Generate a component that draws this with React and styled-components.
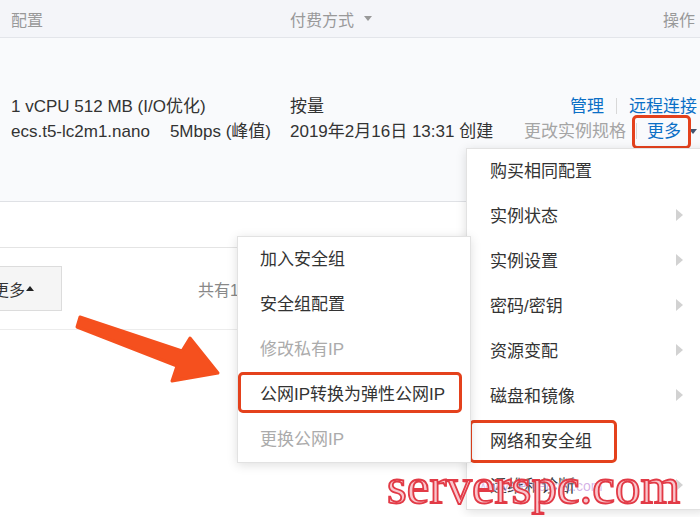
import React from "react";
import styled, { createGlobalStyle } from "styled-components";

const Global = createGlobalStyle`
  html, body { margin: 0; padding: 0; background: #fff; }
  body { font-family: "Liberation Sans", "Noto Sans CJK SC", sans-serif; overflow: hidden; }
`;

const Page = styled.div`
  position: relative;
  width: 700px;
  height: 517px;
  overflow: hidden;
  background: #fff;
  color: #333;
`;

const HeaderRow = styled.div`
  display: grid;
  grid-template-columns: 279px 1fr auto;
  align-items: center;
  height: 38px;
  padding: 0 5px 0 11px;
  background: #f4f5f9;
  border-bottom: 1px solid #e3e5ea;
  box-sizing: border-box;
  font-size: 16px;
  color: #999;
`;

const HeadCell = styled.div`
  display: flex;
  align-items: center;
  gap: 10px;
`;

const DownCaret = styled.span`
  width: 0;
  height: 0;
  border-left: 4px solid transparent;
  border-right: 4px solid transparent;
  border-top: 5px solid ${(p) => p.$color || "#999"};
  display: inline-block;
`;

const DataRow = styled.div`
  display: grid;
  grid-template-columns: 279px 1fr auto;
  align-items: center;
  height: 164px;
  padding: 0 3px 2px 11px;
  background: #f9fafc;
  border-bottom: 1px solid #dfe1e5;
  box-sizing: border-box;
  font-size: 17px;
  line-height: 25px;
`;

const Cell = styled.div`
  display: flex;
  flex-direction: column;
  align-items: ${(p) => (p.$right ? "flex-end" : "flex-start")};
  white-space: nowrap;
`;

const Spaced = styled.span`
  & + & { margin-left: 20px; }
`;

const Line = styled.div`
  display: flex;
  align-items: center;
`;

const ActionLink = styled.span`
  position: relative;
  color: ${(p) => (p.$muted ? "#a5a5a5" : "#0b6fc6")};
`;

const Sep = styled.span`
  width: 1px;
  height: 16px;
  background: #d8d8d8;
  margin: 0 ${(p) => p.$m || 10}px;
`;

const CaretSlot = styled.span`
  display: inline-flex;
  margin-left: 8px;
`;

const Highlight = styled.span`
  position: absolute;
  top: ${(p) => p.$t}px;
  bottom: ${(p) => p.$b}px;
  left: ${(p) => p.$l}px;
  right: ${(p) => p.$r}px;
  border: 3px solid #e4411c;
  border-radius: 5px;
  pointer-events: none;
`;

const Spacer = styled.div`
  height: 46px;
  border-bottom: 1px solid #e4e4e4;
  box-sizing: border-box;
`;

const FooterBar = styled.div`
  display: flex;
  align-items: center;
  height: 82px;
  border-bottom: 1px solid #ececec;
  box-sizing: border-box;
  font-size: 16px;
`;

const MoreButton = styled.div`
  display: flex;
  align-items: center;
  gap: 1px;
  margin-left: -18px;
  width: 80px;
  height: 45px;
  padding-left: 10px;
  box-sizing: border-box;
  background: #f5f5f5;
  border: 1px solid #dcdcdc;
  color: #333;
`;

const UpCaret = styled.span`
  width: 0;
  height: 0;
  border-left: 4px solid transparent;
  border-right: 4px solid transparent;
  border-bottom: 5px solid #222;
  display: inline-block;
`;

const Total = styled.span`
  margin-left: 136px;
  color: #888;
`;

const Menu = styled.div`
  position: absolute;
  left: ${(p) => p.$x}px;
  top: ${(p) => p.$y}px;
  width: ${(p) => p.$w}px;
  background: #fff;
  border: 1px solid #e2e2e2;
  box-shadow: 0 2px 10px rgba(0, 0, 0, 0.13);
  box-sizing: border-box;
  font-size: 17px;
`;

const Item = styled.div`
  position: relative;
  display: flex;
  align-items: center;
  justify-content: space-between;
  height: 45px;
  padding: 0 ${(p) => p.$pr || 16}px 4px ${(p) => p.$pl}px;
  box-sizing: border-box;
  color: ${(p) => (p.$disabled ? "#ababab" : "#333")};
  white-space: nowrap;
`;

const RightCaret = styled.span`
  width: 0;
  height: 0;
  border-top: 6px solid transparent;
  border-bottom: 6px solid transparent;
  border-left: 7px solid #d2d2d2;
  display: inline-block;
`;

const ArrowSvg = styled.svg`
  position: absolute;
  left: 0;
  top: 0;
  pointer-events: none;
`;

const Watermark = styled.div`
  position: absolute;
  left: 387px;
  top: 456px;
  font-family: "Liberation Serif", "DejaVu Serif", serif;
  font-size: 51px;
  line-height: 60px;
  color: #f9c6cd;
  -webkit-text-stroke: 1.8px #e23a46;
  text-shadow: 0 0 3px #fff, 0 0 3px #fff;
  pointer-events: none;
`;

const FaintMark = styled.div`
  position: absolute;
  left: 478px;
  top: 478px;
  font-size: 14px;
  color: rgba(160, 80, 200, 0.45);
  pointer-events: none;
`;

const mainItems = [
  { t: "购买相同配置" },
  { t: "实例状态", sub: true },
  { t: "实例设置", sub: true },
  { t: "密码/密钥", sub: true },
  { t: "资源变配", sub: true },
  { t: "磁盘和镜像", sub: true },
  { t: "网络和安全组", hl: true },
  { t: "运维和诊断", sub: true },
];

const subItems = [
  { t: "加入安全组" },
  { t: "安全组配置" },
  { t: "修改私有IP", dis: true },
  { t: "公网IP转换为弹性公网IP", hl: true },
  { t: "更换公网IP", dis: true },
];

export default function App() {
  return (
    <Page>
      <Global />
      <HeaderRow>
        <HeadCell>配置</HeadCell>
        <HeadCell>
          付费方式 <DownCaret />
        </HeadCell>
        <HeadCell>操作</HeadCell>
      </HeaderRow>
      <DataRow>
        <Cell>
          <div>1 vCPU 512 MB (I/O优化)</div>
          <Line>
            <Spaced>ecs.t5-lc2m1.nano</Spaced>
            <Spaced>5Mbps (峰值)</Spaced>
          </Line>
        </Cell>
        <Cell>
          <div>按量</div>
          <div>2019年2月16日 13:31 创建</div>
        </Cell>
        <Cell $right>
          <Line>
            <ActionLink>管理</ActionLink>
            <Sep $m={12} />
            <ActionLink>远程连接</ActionLink>
          </Line>
          <Line>
            <ActionLink $muted>更改实例规格</ActionLink>
            <Sep $m={10} />
            <ActionLink>
              更多
              <Highlight $t={-4} $b={-5} $l={-15} $r={-10} />
            </ActionLink>
            <CaretSlot>
              <DownCaret $color="#44546e" />
            </CaretSlot>
          </Line>
        </Cell>
      </DataRow>
      <Spacer />
      <FooterBar>
        <MoreButton>
          更多 <UpCaret />
        </MoreButton>
        <Total>共有1条</Total>
      </FooterBar>

      <Menu $x={466} $y={148} $w={240}>
        {mainItems.map((it) => (
          <Item key={it.t} $pl={23} $pr={22}>
            <span>{it.t}</span>
            {it.sub && <RightCaret />}
            {it.hl && <Highlight $t={1} $b={1} $l={2} $r={88} />}
          </Item>
        ))}
      </Menu>

      <Menu $x={237} $y={236} $w={234}>
        {subItems.map((it) => (
          <Item key={it.t} $pl={22} $disabled={it.dis}>
            <span>{it.t}</span>
            {it.hl && <Highlight $t={0} $b={4} $l={0} $r={8} />}
          </Item>
        ))}
      </Menu>

      <ArrowSvg width="700" height="517" viewBox="0 0 700 517">
        <polygon
          points="80,317 182,351 190,338 218,373 172,381 177,366 77,327"
          fill="#f5501e"
          stroke="#f5501e"
          strokeWidth="3"
          strokeLinejoin="round"
        />
      </ArrowSvg>

      <FaintMark>www.serverspc.com</FaintMark>
      <Watermark>serverspc.com</Watermark>
    </Page>
  );
}
